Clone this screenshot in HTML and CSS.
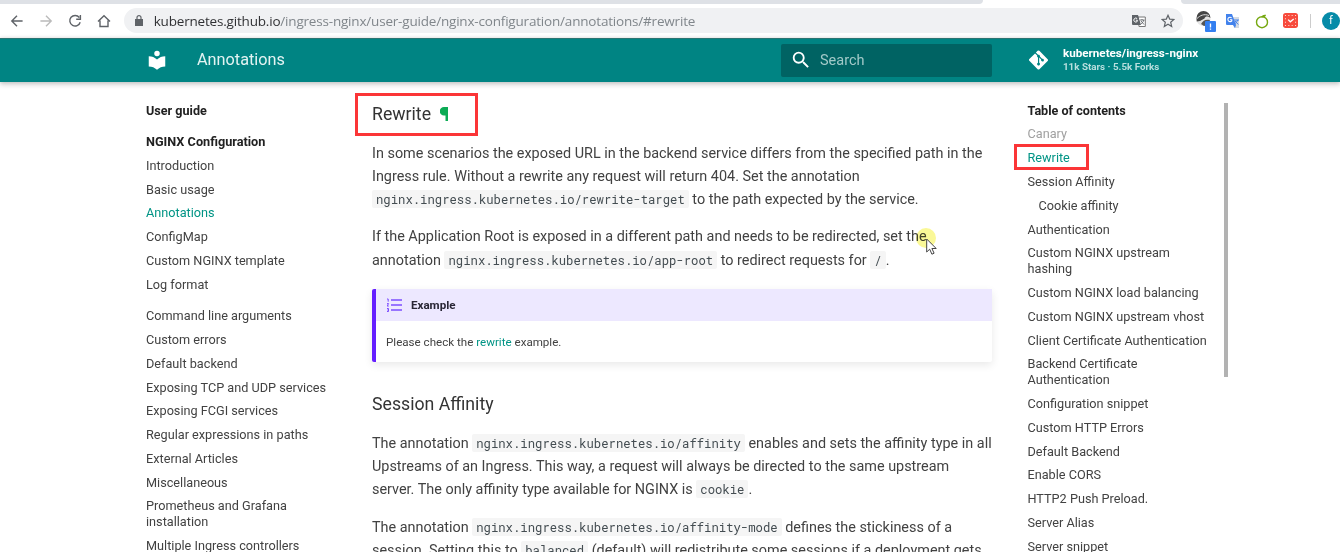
FILE: index.html
```html
<!DOCTYPE html>
<html lang="en">
<head>
<meta charset="utf-8">
<title>Annotations - NGINX Ingress Controller</title>
<link rel="stylesheet" href="styles.css">
</head>
<body>
<div class="tabstrip"><span class="tab-left"></span><span class="tab-active"></span><span class="tab-right"></span></div>
<div class="toolbar">
  <div class="nav-buttons">
    <svg width="14" height="14" viewBox="0 0 14 14"><path d="M12.6 7H2M7 1.8 1.8 7 7 12.2"/></svg>
    <svg class="disabled" width="14" height="14" viewBox="0 0 14 14"><path d="M1.4 7H12M7 1.8 12.2 7 7 12.2"/></svg>
    <svg width="14" height="14" viewBox="0 0 14 14"><path d="M11.3 3.5A5.3 5.3 0 1 0 12.2 8.2M12.4 1v4.2H8.2"/></svg>
    <svg width="14" height="14" viewBox="0 0 14 14"><path d="M1 7.6 7 1.7 13 7.6M3 6.5v6h8v-6"/></svg>
  </div>
  <div class="omnibox">
    <svg class="lock" width="8" height="11" viewBox="0 0 8 11"><path fill="#5f6368" d="M0 4h8v7H0z"/><path fill="none" stroke="#5f6368" stroke-width="1.2" d="M2 4.5V2.6a2 2 0 0 1 4 0v1.9"/></svg>
    <span class="url"><b>kubernetes.github.io</b>/ingress-nginx/user-guide/nginx-configuration/annotations/#rewrite</span>
    <svg class="page-translate" width="14" height="14" viewBox="0 0 14 14"><path fill="#fff" stroke="#777" d="M6 3h7.3v9.5H7z"/><path fill="#5f6368" d="M0 1h6l3 10H1a1 1 0 0 1-1-1z"/><path fill="none" stroke="#fff" d="M5.200 4.600a2 2 0 1 0 .1 2.800V6.200H3.800"/><path fill="none" stroke="#5f6368" stroke-width=".9" d="M8 6h4.500M10 5v1M11.800 6c-.5 2-1.600 3-2.800 4M9 7l3 3.500"/></svg>
    <svg class="star" width="14" height="14" viewBox="0 0 14 14"><path fill="none" stroke="#5f6368" stroke-width="1.2" d="m7 1.300 1.700 3.800 4.200.4-3.200 2.800 1 4.200L7 10.300l-3.700 2.200 1-4.200L1.100 5.500l4.200-.4z"/></svg>
  </div>
  <div class="extensions">
    <svg width="21" height="22" viewBox="0 0 21 22"><circle cx="8.500" cy="9" r="7" fill="#e4e4e4"/><path fill="#444" d="M1.500 8A7 7 0 0 1 15.500 8c-3-2-5-2-6 .5L5 11l-3.300.5z"/><path fill="none" stroke="#ddd" d="M2 8.500c3-3 7-5 12-3"/><path fill="#555" d="M6 14c2-4 5-5 9-4-1 3-3 6-6 6z"/><rect x="10" y="11" width="11" height="11" rx="1" fill="#347ff0"/><path stroke="#fff" stroke-width="1.300" d="M15.500 13.500v4M15.500 18.500v1.300"/></svg>
    <svg width="15" height="16" viewBox="0 0 15 16"><path fill="#d5dbe3" d="M7 4h7v11H9z"/><path fill="#4282ec" d="M1 1h6l4 11H2a1 1 0 0 1-1-1zM8 12h3l-1 3z"/><path fill="none" stroke="#fff" stroke-width="1.100" d="M6.600 4.800a2.200 2.200 0 1 0 .2 3V6.700H5"/><path fill="none" stroke="#4282ec" d="M8.800 7H14M12.500 7c-.5 2-1.500 3-3 4.200M10 8l3.300 3.500"/></svg>
    <svg width="14" height="16" viewBox="0 0 14 16"><circle cx="7" cy="9.200" r="5.500" fill="none" stroke="#76a810" stroke-width="1.400"/><path fill="#76a810" d="M6.500 4.500C7 2 8.500 1.500 11 1.800 11 3.500 9.500 4.500 6.500 4.500z"/></svg>
    <svg width="15" height="15" viewBox="0 0 14 14"><rect width="14" height="14" rx="2.500" fill="#f74a3c"/><path fill="none" stroke="#fff" stroke-width="1.200" d="m4.800 6.200 2 2L10 5.500"/><path fill="none" stroke="#ffd9cf" stroke-width="1" stroke-dasharray="1 2.133" stroke-dashoffset=".5" d="M2.300 2.300h9.400v9.400H2.300z"/></svg>
    <span class="divider"></span>
    <span class="avatar">f</span>
  </div>
</div>
<header class="header">
  <svg class="logo" width="22" height="22" viewBox="0 0 24 24"><path fill="#fff" d="M12 8a3 3 0 0 0 3-3 3 3 0 0 0-3-3 3 3 0 0 0-3 3 3 3 0 0 0 3 3m0 3.540C9.640 9.350 6.500 8 3 8v11c3.500 0 6.640 1.350 9 3.540 2.360-2.190 5.500-3.540 9-3.540V8c-3.500 0-6.640 1.350-9 3.540z"/></svg>
  <span class="title">Annotations</span>
  <div class="search"><svg width="22" height="22" viewBox="0 0 24 24"><path fill="#fff" d="M9.500 3A6.500 6.500 0 0 1 16 9.500c0 1.610-.59 3.090-1.560 4.230l.27.270h.79l5 5-1.500 1.500-5-5v-.79l-.27-.27A6.516 6.516 0 0 1 9.500 16 6.500 6.500 0 0 1 3 9.500 6.500 6.500 0 0 1 9.500 3m0 2C7 5 5 7 5 9.500S7 14 9.500 14 14 12 14 9.500 12 5 9.500 5z"/></svg><span>Search</span></div>
  <a class="repo"><svg width="19" height="22" viewBox="0 0 448 512"><path fill="#fff" d="M439.550 236.050L244 40.450a28.870 28.870 0 0 0-40.810 0l-40.660 40.630 51.520 51.520c27.060-9.140 52.680 16.770 43.390 43.680l49.660 49.660c34.230-11.800 61.180 31 35.470 56.690-26.490 26.490-70.210-2.870-56-37.340L240.220 199v121.850c25.300 12.540 22.260 41.850 9.080 55a34.340 34.340 0 0 1-48.550 0c-17.570-17.600-11.070-46.910 11.250-56v-123c-20.800-8.510-24.600-30.740-18.640-45L142.570 101 8.450 235.140a28.860 28.860 0 0 0 0 40.810l195.610 195.600a28.860 28.860 0 0 0 40.800 0l194.690-194.690a28.860 28.860 0 0 0 0-40.810z"/></svg>
  <span class="facts"><b>kubernetes/ingress-nginx</b><small>11k Stars · 5.5k Forks</small></span></a>
</header>
<main class="layout">
  <nav class="sidebar">
    <h3>User guide</h3>
    <ul class="group">
      <li class="section">NGINX Configuration</li>
      <li>Introduction</li><li>Basic usage</li><li class="active">Annotations</li><li>ConfigMap</li><li>Custom NGINX template</li><li>Log format</li>
    </ul>
    <ul>
      <li>Command line arguments</li><li>Custom errors</li><li>Default backend</li><li>Exposing TCP and UDP services</li><li>Exposing FCGI services</li><li>Regular expressions in paths</li><li>External Articles</li><li>Miscellaneous</li><li>Prometheus and Grafana<br>installation</li><li>Multiple Ingress controllers</li>
    </ul>
  </nav>
  <article class="content">
    <h3 class="first">Rewrite <svg width="8" height="14" viewBox="0 0 8 14"><path fill="#0cab55" d="M8 0v14H5.500V8.500H4A4 4 0 0 1 4 0z"/></svg></h3>
    <p>In some scenarios the exposed URL in the backend service differs from the specified path in the<br>Ingress rule. Without a rewrite any request will return 404. Set the annotation<br><code>nginx.ingress.kubernetes.io/rewrite-target</code> to the path expected by the service.</p>
    <p>If the Application Root is exposed in a different path and needs to be redirected, set the<br>annotation <code>nginx.ingress.kubernetes.io/app-root</code> to redirect requests for <code>/</code>.</p>
    <div class="admonition">
      <div class="admonition-title"><svg width="16" height="14" viewBox="0 0 16 14"><path stroke="#7c4dff" stroke-width="1.500" d="M4 2h11M4 7h11M4 12h11"/><path fill="none" stroke="#7c4dff" d="M0 1h1.200v2.700M0 5.600h1.600L0 8h1.800M0 10.500h1.500v3H0M.3 12h1.200"/></svg>Example</div>
      <div class="admonition-body">Please check the <a>rewrite</a> example.</div>
    </div>
    <h3>Session Affinity</h3>
    <p>The annotation <code>nginx.ingress.kubernetes.io/affinity</code> enables and sets the affinity type in all<br>Upstreams of an Ingress. This way, a request will always be directed to the same upstream<br>server. The only affinity type available for NGINX is <code>cookie</code>.</p>
    <p>The annotation <code>nginx.ingress.kubernetes.io/affinity-mode</code> defines the stickiness of a<br>session. Setting this to <code>balanced</code> (default) will redistribute some sessions if a deployment gets</p>
  </article>
  <nav class="toc">
    <h3>Table of contents</h3>
    <ul>
      <li class="passed">Canary</li><li class="active">Rewrite</li><li>Session Affinity</li><li class="nested">Cookie affinity</li><li>Authentication</li><li>Custom NGINX upstream<br>hashing</li><li>Custom NGINX load balancing</li><li>Custom NGINX upstream vhost</li><li>Client Certificate Authentication</li><li>Backend Certificate<br>Authentication</li><li>Configuration snippet</li><li>Custom HTTP Errors</li><li>Default Backend</li><li>Enable CORS</li><li>HTTP2 Push Preload.</li><li>Server Alias</li><li>Server snippet</li>
    </ul>
  </nav>
  <div class="scrollbar"></div>
</main>
<div class="mark mark-heading"></div>
<div class="mark mark-toc"></div>
<div class="halo"></div>
<svg class="cursor" width="12" height="18" viewBox="0 0 12 18"><path fill="#fff" stroke="#444" d="M.7 1v13l3-2.800 2.200 5 2.200-1-2.200-4.700h4.300z"/></svg>
</body>
</html>
```
FILE: styles.css
```css
* { box-sizing: border-box; }
body { margin: 0; width: 1340px; height: 552px; overflow: hidden; position: relative; background: #fff; font-family: Roboto, sans-serif; color: #424242; }
h3, p, ul { margin: 0; padding: 0; list-style: none; }
svg { flex: none; }

/* Browser chrome */
.tabstrip { display: flex; height: 4px; background: #fff; }
.tab-left { width: 983px; background: #dee1e6; border-bottom-right-radius: 4px; }
.tab-active { width: 198px; }
.tab-right { flex: 1; background: #dee1e6; border-bottom-left-radius: 4px; }
.toolbar { display: flex; align-items: center; height: 34px; padding-bottom: 1px; overflow: hidden; }
.nav-buttons { display: flex; gap: 15px; width: 124px; padding-left: 10px; }
.nav-buttons path { fill: none; stroke: #5f6368; stroke-width: 1.4; }
.nav-buttons .disabled path { stroke: #bbb; }
.omnibox { display: flex; align-items: center; width: 1062px; height: 25px; border-radius: 13px; background: #f0f1f3; padding: 0 9px 0 11px; }
.lock { margin-right: 11px; }
.url { flex: 1; font: 13.5px/20px "Open Sans", sans-serif; letter-spacing: -.19px; color: #80868b; white-space: nowrap; }
.url b { font-weight: 400; color: #303134; }
.star { margin: 0 -1px 0 15px; }
.page-translate { margin-right: 0; }
.extensions { display: flex; align-items: center; padding-left: 12px; }
.extensions svg:nth-child(2) { margin-left: 9px; }
.extensions svg:nth-child(3) { margin-left: 15px; }
.extensions svg:nth-child(4) { margin-left: 14px; }
.divider { width: 1px; height: 14px; margin: 0 11px 0 12px; background: #ccc; }
.avatar { flex: none; width: 18px; height: 18px; border-radius: 50%; background: #068ba8; color: #fff; font-size: 11px; line-height: 18px; text-align: center; }

/* Site header */
.header { display: flex; align-items: center; height: 43.5px; padding-left: 146px; background: #008483; border-top: 1px solid #2c7472; color: #fff; box-shadow: 0 0 4px rgba(0,0,0,.15), 0 3px 5px rgba(0,0,0,.16); }
.title { width: 584px; margin-left: 29px; font-size: 16.25px; line-height: 22px; color: #e2f3f2; }
.search { display: flex; align-items: center; width: 211px; height: 33px; padding-left: 9px; border-radius: 2px; background: #006363; color: #a1c9c8; font-size: 14.5px; }
.search span { margin-left: 8px; }
.repo { display: flex; align-items: center; margin-left: 37px; }
.facts { margin-left: 15px; font-size: 11.65px; line-height: 13px; }
.facts b, .facts small { display: block; font-weight: 700; }
.facts small { font-size: 9.8px; line-height: 13px; color: #b8dfde; }

/* Page columns */
.layout { display: grid; grid-template-columns: 226px 620px 180px 4px; padding-left: 146px; }
.sidebar, .toc { padding-top: 21px; font-size: 12.7px; line-height: 15.86px; white-space: nowrap; }
.sidebar h3, .toc h3 { font-size: 12.6px; font-weight: 700; line-height: 16px; color: #212121; }
.sidebar li, .toc li { margin-top: 7.93px; }
.sidebar .group { margin: 15.5px 0 15.7px; }
.sidebar .group .section { margin-top: 0; font-weight: 700; color: #212121; }
.sidebar li.active, .toc li.active { color: #009485; }
.toc { margin-left: 35.5px; }
.toc .passed { color: #a0a0a0; }
.toc .nested { padding-left: 11px; }
.content h3 { height: 24px; margin: 30px 0 16px; font-size: 17.7px; font-weight: 400; line-height: 24px; color: #333; }
.content h3.first { margin-top: 20px; }
.content h3 svg { margin-left: 5px; vertical-align: -1px; }
.content p { margin-bottom: 14.3px; font-size: 14.42px; line-height: 23.2px; white-space: nowrap; }
.content code { padding: 1px 4px; border-radius: 2px; background: #f5f5f5; color: #444d52; font: 12.25px/14px "Roboto Mono", "Liberation Mono", monospace; }
.admonition { height: 73px; margin-top: 17px; border-left: 4px solid #651fff; border-radius: 2px; font-size: 11.6px; box-shadow: 0 3px 8px rgba(0,0,0,.09); }
.admonition-title { display: flex; align-items: center; gap: 8px; height: 32px; padding-left: 11px; background: #ede8ff; font-weight: 700; color: #292635; }
.admonition-body { padding: 12px 10px; line-height: 19px; }
.admonition a { color: #009485; }
.scrollbar { width: 4px; height: 274px; margin: 21px 0 0 52px; background: #b2b2b2; }

/* Pointer and highlighted regions */
.mark { position: absolute; border: 3px solid #fb3537; }
.mark-heading { left: 355px; top: 93px; width: 123px; height: 43px; }
.mark-toc { left: 1014px; top: 144px; width: 75px; height: 26px; }
.halo { position: absolute; left: 916px; top: 228px; width: 20px; height: 20px; border-radius: 50%; background: #f8f56a; opacity: .7; mix-blend-mode: multiply; }
.cursor { position: absolute; left: 926px; top: 238px; }
```
